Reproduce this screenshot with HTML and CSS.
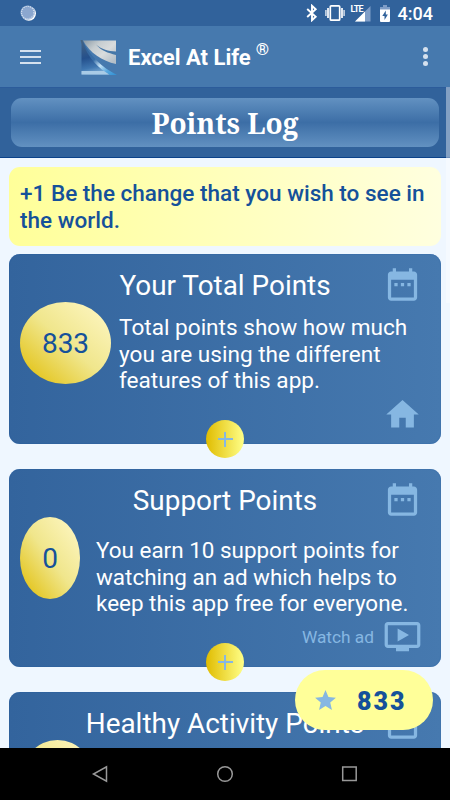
FILE: index.html
```html
<!DOCTYPE html>
<html lang="en">
<head>
<meta charset="utf-8">
<title>Points Log</title>
<link rel="stylesheet" href="styles.css">
</head>
<body>
<svg class="defs" width="0" height="0">
  <symbol id="calendar" viewBox="0 0 24 24"><path d="M9 11H7v2h2v-2zm4 0h-2v2h2v-2zm4 0h-2v2h2v-2zm2-7h-1V2h-2v2H8V2H6v2H5c-1.11 0-1.99.9-1.99 2L3 20c0 1.1.89 2 2 2h14c1.1 0 2-.9 2-2V6c0-1.1-.9-2-2-2zm0 16H5V9h14v11z"/></symbol>
</svg>
<div class="screen">
  <div class="status">
    <svg class="spinner" viewBox="0 0 16 16" width="16" height="16"><circle cx="8.8" cy="8.6" r="7.2" fill="#fff"/><circle cx="7.7" cy="7.6" r="7.2" fill="#9ab3d5"/><circle cx="7.7" cy="7.6" r="6.2" fill="#8ba7cf" stroke="#d5e1f0" stroke-width="1.2" stroke-dasharray="1 1.2"/></svg>
    <div class="status-icons">
      <svg class="bt" viewBox="0 0 12 18" width="12" height="18" fill="none" stroke="#fff" stroke-width="1.9"><path d="M1.200 5l8.500 7.700L6 16.200V1.800l3.700 3.500L1.200 13"/></svg>
      <svg class="vib" viewBox="0 0 20 18" width="20" height="18" fill="none" stroke="#fff" stroke-width="1.7"><rect x="5.3" y="1.8" width="9.4" height="14.4" rx="1"/><path d="M3 4v10M17 4v10"/><path d="M.9 6v6M19.1 6v6" stroke-opacity=".7"/></svg>
      <div class="signal"><span class="lte">LTE</span><svg viewBox="0 0 16 16" width="16" height="16"><path d="M15.500 0v15.500H0z" fill="#7f9dc7"/><path d="M10 5.500v10H0z" fill="#fff"/></svg></div>
      <svg class="bat" viewBox="0 0 10 17" width="10" height="17"><path d="M3 0h4v2h3v3H0V2h3z" fill="#7f9dc7"/><path d="M0 4.500h10V16a1 1 0 0 1-1 1H1a1 1 0 0 1-1-1z" fill="#fff"/><path d="M5.800 5.500L2.300 11h2.200v4L7.900 9.500H5.800z" fill="#31629b"/></svg>
      <span class="clock">4:04</span>
    </div>
  </div>
  <header class="appbar">
    <div class="menu"><i></i><i></i><i></i></div>
    <svg class="logo" viewBox="0 0 38 38" width="38" height="38">
      <defs>
        <linearGradient id="silver" x1="0" y1="0" x2="1" y2=".8"><stop offset="0" stop-color="#8999a5"/><stop offset=".35" stop-color="#c6cdd0"/><stop offset=".65" stop-color="#d9dcdd"/><stop offset="1" stop-color="#b4bfc8"/></linearGradient>
        <linearGradient id="deep" x1=".2" y1="0" x2=".4" y2="1"><stop offset="0" stop-color="#466482"/><stop offset=".5" stop-color="#24508c"/><stop offset=".8" stop-color="#3f76b0"/><stop offset="1" stop-color="#7eaed6"/></linearGradient>
        <linearGradient id="streak" x1="0" y1="0" x2="1" y2="1"><stop offset="0" stop-color="#2f5f94"/><stop offset=".45" stop-color="#3a70a8"/><stop offset=".62" stop-color="#c4e2f6"/><stop offset=".8" stop-color="#58a7de"/><stop offset="1" stop-color="#2e8fd3"/></linearGradient>
      </defs>
      <path d="M3 1.500h33V25C22 22 10 14 3 1.500z" fill="url(#silver)"/>
      <path d="M16 5.500c6 5 12 6.500 20 7v3.500C28 14 21 11.500 16 5.500z" fill="#4577a8"/>
      <path d="M.5 1h2C9 17 18 28 30 35.500H1.500V5z" fill="url(#deep)"/>
      <path d="M2 2c9 15 19 26 35 34h-7C19 30 8 19 2 2z" fill="url(#streak)"/>
      <path d="M1.500 32H24l5 3.500H1.500z" fill="#a9cbe6"/>
    </svg>
    <div class="brand">Excel At Life</div><span class="reg">®</span>
    <div class="dots"><i></i><i></i><i></i></div>
  </header>
  <div class="band"><h1>Points Log</h1></div>
  <main class="content">
    <p class="quote">+1 Be the change that you wish to see in<br>the world.</p>
    <section class="card total">
      <div class="head"><h2>Your Total Points</h2><svg class="icon"><use href="#calendar"/></svg></div>
      <div class="body"><div class="score wide">833</div><p>Total points show how much<br>you are using the different<br>features of this app.</p></div>
      <div class="foot"><svg class="icon" viewBox="0 0 24 24"><path d="M10 20v-6h4v6h5v-8h3L12 3 2 12h3v8z"/></svg></div>
      <div class="plus"></div>
    </section>
    <section class="card support">
      <div class="head"><h2>Support Points</h2><svg class="icon"><use href="#calendar"/></svg></div>
      <div class="body"><div class="score narrow">0</div><p>You earn 10 support points for<br>watching an ad which helps to<br>keep this app free for everyone.</p></div>
      <div class="foot"><span class="watch">Watch ad</span><svg class="icon" viewBox="0 0 24 24"><path d="M21 3H3c-1.11 0-2 .89-2 2v12c0 1.1.89 2 2 2h5v2h8v-2h5c1.1 0 1.99-.9 1.99-2L23 5c0-1.11-.9-2-2-2zm0 14H3V5h18v12zm-5-6l-7 4V7z"/></svg></div>
      <div class="plus"></div>
    </section>
    <section class="card healthy">
      <div class="head"><h2>Healthy Activity Points</h2><svg class="icon"><use href="#calendar"/></svg></div>
      <div class="body"><div class="score mid"></div></div>
    </section>
  </main>
  <nav class="nav">
    <svg viewBox="0 0 18 18" width="18" height="18"><path d="M15.500 1.800v14.400L2.500 9z"/></svg>
    <svg viewBox="0 0 18 18" width="18" height="18"><circle cx="9" cy="9" r="7.3"/></svg>
    <svg viewBox="0 0 18 18" width="18" height="18"><rect x="1.700" y="2" width="13.500" height="13.500"/></svg>
  </nav>
  <div class="scrollbar"></div>
  <div class="badge"><svg viewBox="0 0 24 24" width="25" height="25"><path d="M12 17.270L18.180 21l-1.640-7.030L22 9.240l-7.190-.61L12 2 9.190 8.630 2 9.240l5.460 4.730L5.820 21z"/></svg><span>833</span></div>
</div>
</body>
</html>
```

FILE: styles.css
```css
* { box-sizing: border-box; }
body { margin: 0; font-family: Roboto, "Liberation Sans", sans-serif; color: #fff; }
h1, h2, p { margin: 0; }
.defs { display: block; }
.screen { position: relative; width: 450px; height: 800px; overflow: hidden; display: flex; flex-direction: column; background: #eff7ff; }

.status { flex: none; height: 26px; background: #31629b; display: flex; justify-content: space-between; align-items: center; padding: 0 17px 0 20px; }
.status-icons { display: flex; align-items: center; }
.vib { margin-left: 7px; }
.signal { display: flex; margin-left: 6px; width: 20px; height: 16px; }
.signal svg { flex: none; margin-left: -9px; margin-top: 1px; }
.lte { font-size: 9px; line-height: 9px; font-weight: 700; width: 13px; flex: none; letter-spacing: -.8px; }
.bat { margin-left: 9px; }
.clock { margin-left: 8px; font-size: 18px; font-weight: 500; line-height: 26px; padding-top: 1px; }

.appbar { flex: none; height: 61px; background: #4679ae; display: flex; align-items: center; padding: 0 22px 0 20px; }
.menu { width: 21px; display: flex; flex-direction: column; gap: 4px; }
.menu i { height: 2px; background: #d5e1ee; }
.logo { margin: 2px 0 0 39px; }
.brand { margin: 2px 0 0 10px; font-size: 22px; font-weight: 700; white-space: nowrap; }
.reg { margin: -16px 0 0 5px; font-size: 17px; font-weight: 500; }
.dots { margin-left: auto; display: flex; flex-direction: column; gap: 2px; }
.dots i { width: 5px; height: 5px; border-radius: 50%; background: #d5e1ee; }

.band { flex: none; height: 71px; padding: 10px 11px; background: #31629b; border-top: 1px solid #2c5c9b; border-bottom: 1px solid #0b428a; }
.band h1 { height: 49px; border-radius: 11px; background: linear-gradient(#6291c1, #3c6ea6 50%, #6291c1); text-align: center; font: 700 28px/51px "Noto Serif", "Droid Serif", "DejaVu Serif Condensed", "DejaVu Serif", serif; }

.content { flex: 1; min-height: 0; overflow: hidden; padding: 9px 9px 0; }
.quote { height: 79px; padding: 14px 11px; border-radius: 11px; background: linear-gradient(90deg, #ffff99, #ffffdf); color: #15519a; font-size: 22.55px; font-weight: 500; line-height: 26.7px; white-space: nowrap; }
.card { position: relative; border-radius: 11px; background: linear-gradient(90deg, #33649d, #4679af); box-shadow: inset 0 0 1px #0b4a96; padding-top: 11px; }
.total { height: 190px; margin-top: 8px; }
.support { height: 198px; margin-top: 25px; }
.healthy { height: 198px; margin-top: 25px; }
.head { height: 39px; padding: 0 19px; display: grid; grid-template-columns: 39px 1fr 39px; align-items: start; }
.head h2 { grid-column: 2; font-size: 27.9px; font-weight: 400; line-height: 39px; padding-top: 1px; text-align: center; white-space: nowrap; }
.icon { width: 39px; height: 39px; fill: #86b7e2; display: block; }
.body { margin-top: -2px; padding-left: 11px; display: flex; align-items: flex-start; }
.total .body { height: 93px; }
.support .body { height: 100px; }
.body p { line-height: 26.7px; white-space: nowrap; }
.total p { margin: 13px 0 0 8px; font-size: 22.6px; }
.support p { margin: 20px 0 0 16px; font-size: 22.45px; }
.score { flex: none; height: 82px; border-radius: 50%; background: linear-gradient(to top right, #e0bc00, #f0e68c 50%, #fff8c8); color: #15519a; font-size: 28px; line-height: 84px; text-align: center; }
.wide { width: 91px; }
.narrow { width: 60px; }
.mid { width: 75px; }
.foot { height: 39px; padding-right: 19px; display: flex; justify-content: flex-end; align-items: center; }
.watch { font-size: 17.3px; color: #86b7e2; margin-right: 9px; }
.plus { position: absolute; left: 197px; bottom: -14px; width: 38px; height: 38px; border-radius: 50%; background: linear-gradient(#86b7e2, #86b7e2) center / 15px 2px no-repeat, linear-gradient(#86b7e2, #86b7e2) center / 2px 15px no-repeat, linear-gradient(90deg, #e0bc00, #ffff88); }

.nav { flex: none; height: 52px; background: #000; display: flex; justify-content: center; align-items: center; gap: 107px; }
.nav svg { fill: none; stroke: #999; stroke-width: 1.5; }
.scrollbar { position: absolute; right: 0; top: 87px; width: 4px; height: 216px; background: rgba(255,255,255,.4); }
.badge { position: absolute; left: 295px; top: 670px; width: 138px; height: 60px; border-radius: 30px; background: #ffff99; color: #15519a; display: flex; align-items: center; padding-left: 18px; font-size: 25px; font-weight: 900; letter-spacing: 2px; }
.badge svg { fill: #86b7e2; }
.badge span { margin-left: 19px; padding-top: 3px; }
```
